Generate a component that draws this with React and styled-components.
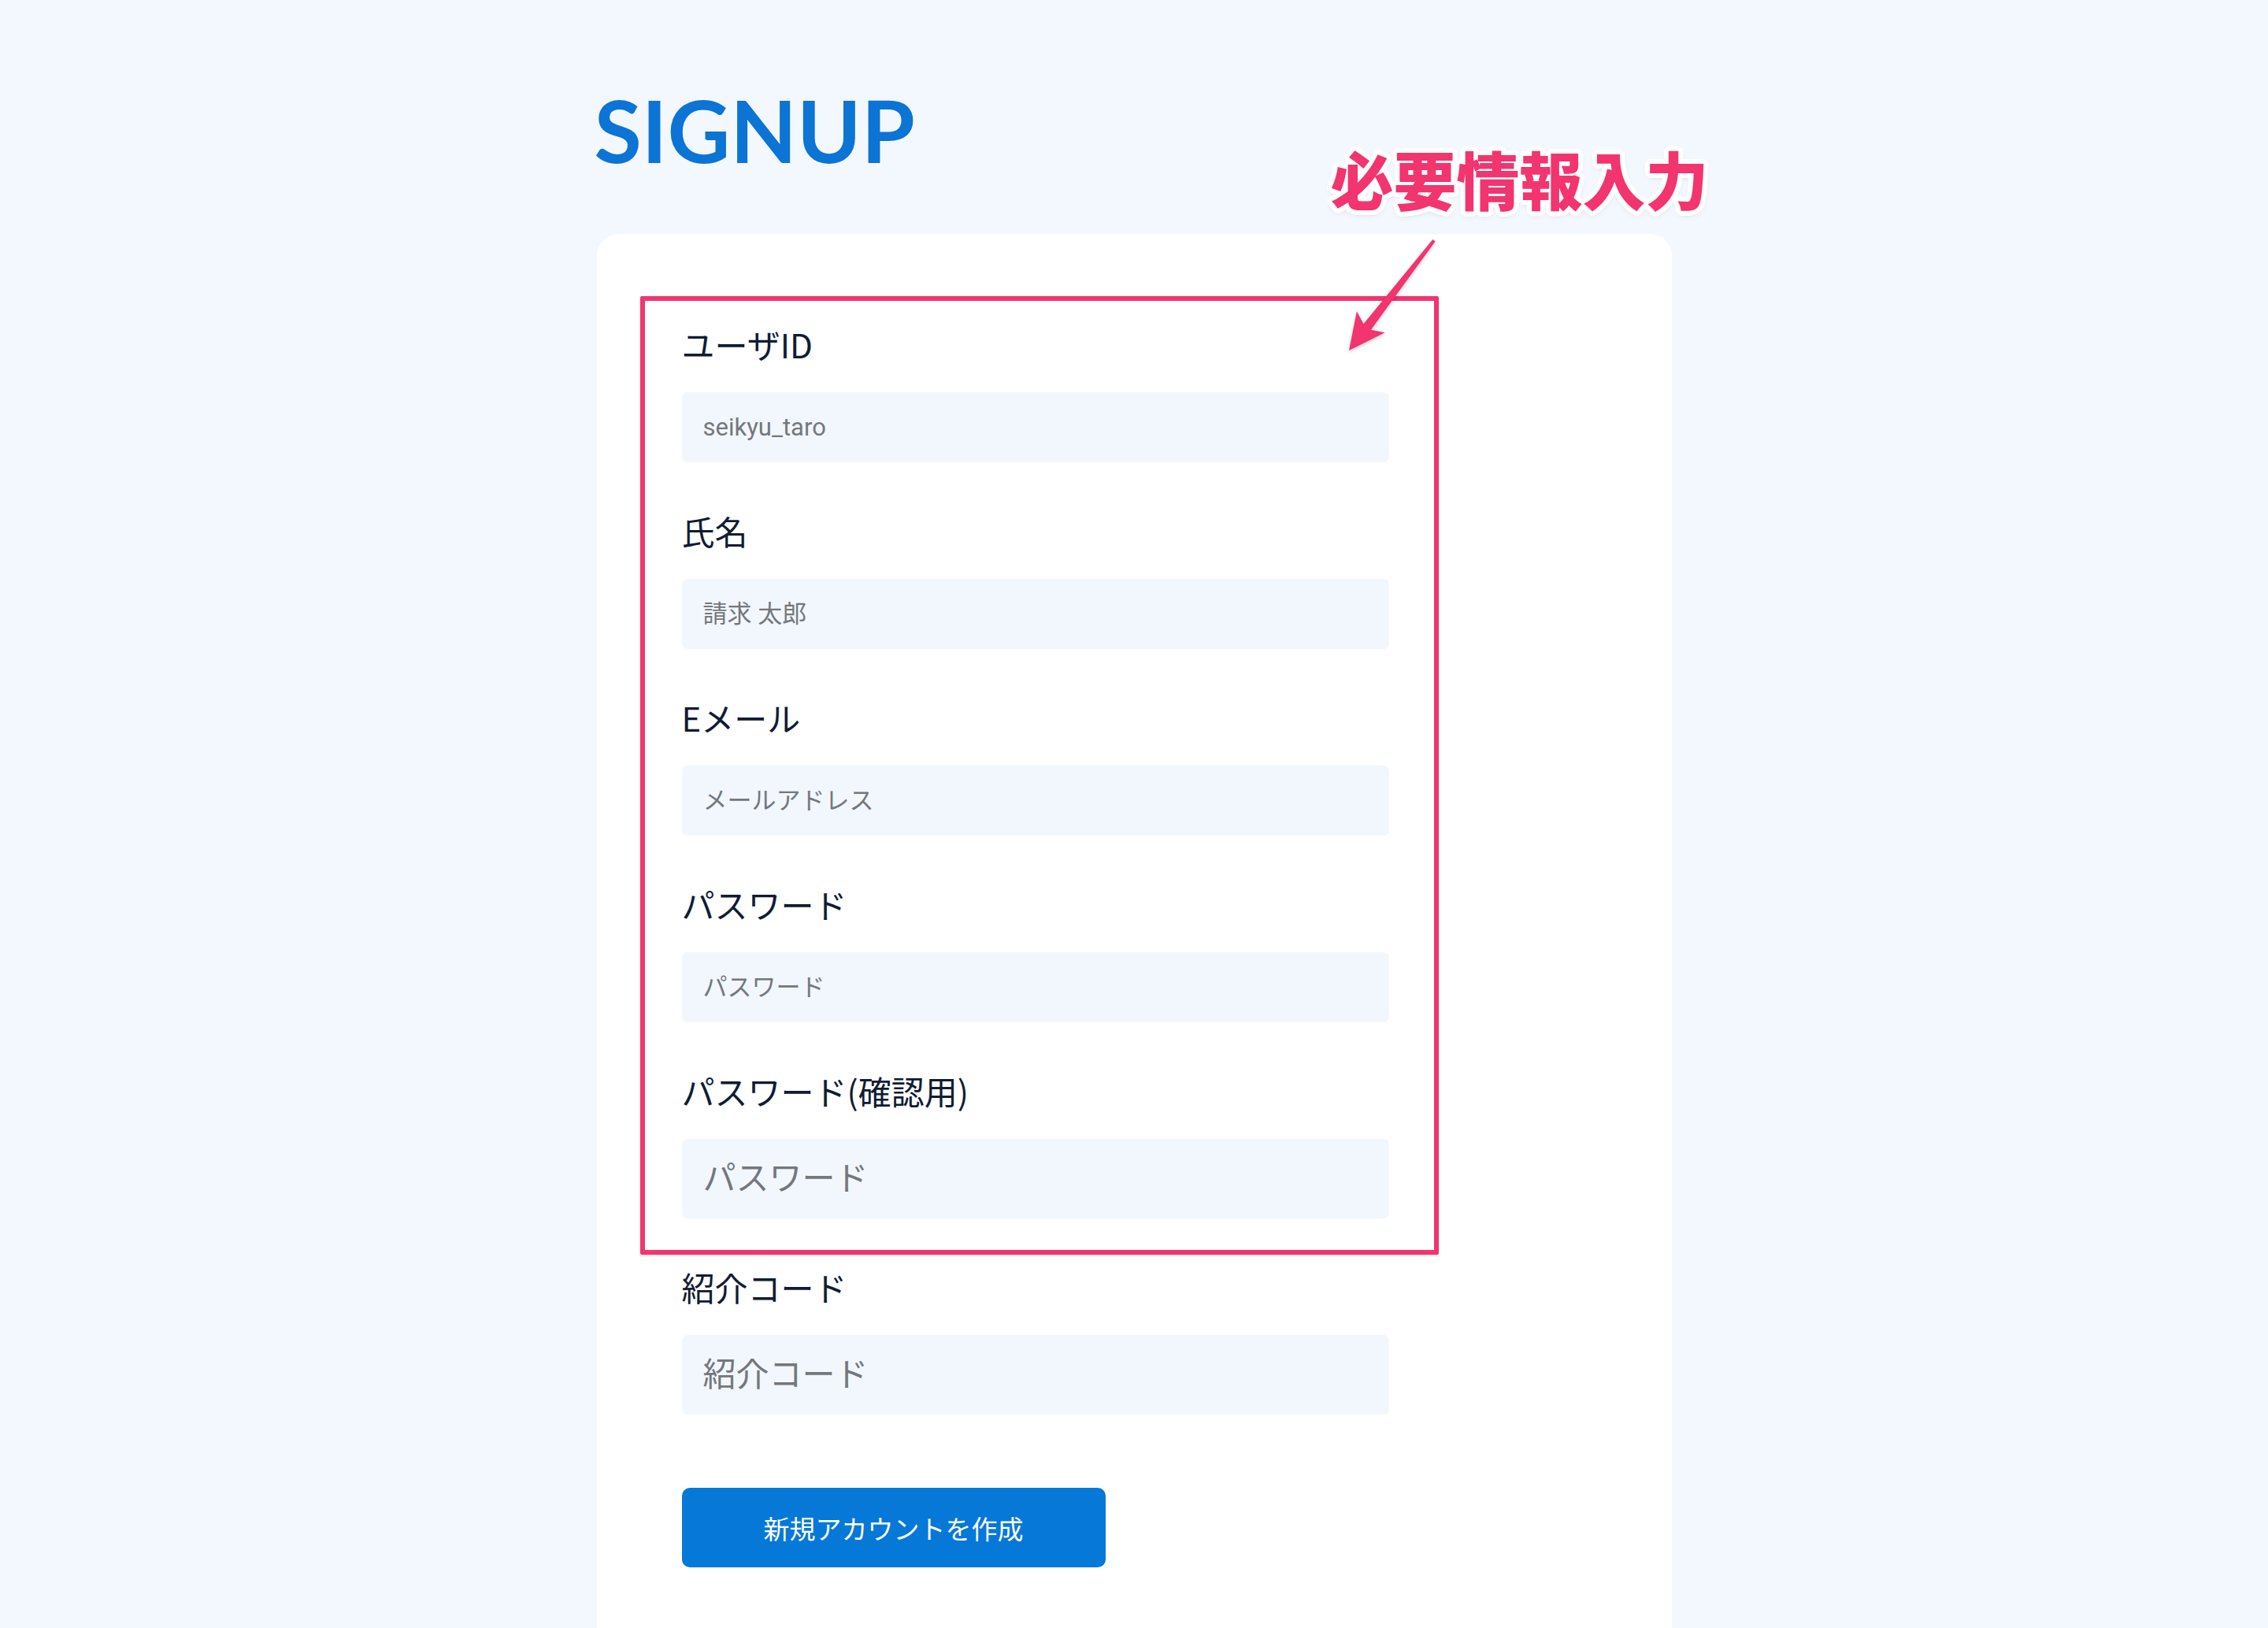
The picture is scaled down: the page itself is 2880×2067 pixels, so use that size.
import React from 'react'
import styled, { createGlobalStyle } from 'styled-components'

const outline = (r, color) => {
  const list = []
  for (let i = 0; i < 24; i++) {
    const a = (i / 24) * Math.PI * 2
    list.push(`${(Math.cos(a) * r).toFixed(2)}px ${(Math.sin(a) * r).toFixed(2)}px 0 ${color}`)
  }
  return list.join(',')
}

const GlobalStyle = createGlobalStyle`
body{
margin:0;
background-color:#f3f8fe;
font-family:"Noto Sans CJK JP", sans-serif;
overflow:hidden;
}
`

const Page = styled.div`
position:relative;
width:1365px;
margin:0 auto;
padding-top:109px;
`
const Title = styled.h1`
margin:0 0 77px -3px;
font-family:Lato, "Liberation Sans", sans-serif;
font-weight:700;
font-size:110px;
line-height:111px;
letter-spacing:0;
color:#0b74d5;
`
const Card = styled.div`
position:relative;
background-color:#ffffff;
border-radius:28px 28px 0 0;
padding:110px 108px 140px 108px;
`
const Form = styled.form`
display:flex;
flex-direction:column;
width:898px;
`
const Field = styled.div`
display:flex;
flex-direction:column;
margin-bottom:57px;
`
const Label = styled.label`
font-family:"Noto Sans CJK JP", sans-serif;
font-size:42px;
line-height:60px;
color:#0f1c33;
margin-bottom:31px;
`
const Input = styled.input`
box-sizing:border-box;
width:100%;
height:${({ large }) => large ? "101px" : "89px"};
border:none;
border-radius:7px;
background-color:#f2f7fd;
padding:0 27px;
font-family:Roboto, "Noto Sans CJK JP", sans-serif;
font-size:${({ large }) => large ? "42px" : "31px"};
color:#333;
outline:none;
&::placeholder{
color:#74777c;
}
`
const Button = styled.button`
margin-top:36px;
width:538px;
height:101px;
border:none;
border-radius:10px;
background-color:#0678d8;
color:#ffffff;
font-family:"Noto Sans CJK JP", sans-serif;
font-size:33px;
cursor:pointer;
`
const Highlight = styled.div`
position:absolute;
left:55px;
top:79px;
width:1014px;
height:1217px;
box-sizing:border-box;
border:6px solid #f2346f;
border-radius:2px;
box-shadow:0 1px 3px rgba(0,0,0,0.18);
pointer-events:none;
`
const Note = styled.div`
position:absolute;
left:932px;
top:185px;
font-family:"Noto Sans CJK JP", sans-serif;
font-weight:900;
font-size:80px;
line-height:80px;
color:#f2346f;
white-space:nowrap;
text-shadow:${outline(6, "#ffffff")},${outline(3, "#ffffff")},0 3px 8px rgba(60,70,90,0.35);
`
const Arrow = styled.svg`
position:absolute;
left:943px;
top:295px;
width:130px;
height:160px;
overflow:visible;
filter:drop-shadow(0 2px 2px rgba(0,0,0,0.2));
`

const fields = [
  { label: "ユーザID", placeholder: "seikyu_taro" },
  { label: "氏名", placeholder: "請求 太郎" },
  { label: "Eメール", placeholder: "メールアドレス" },
  { label: "パスワード", placeholder: "パスワード" },
  { label: "パスワード(確認用)", placeholder: "パスワード", large: true },
  { label: "紹介コード", placeholder: "紹介コード", large: true },
]

const App = () => {
  return (
    <>
      <GlobalStyle />
      <Page>
        <Title>SIGNUP</Title>
        <Card>
          <Form onSubmit={(e) => e.preventDefault()}>
            {
              fields.map((item) => (
                <Field key={item.label}>
                  <Label>{item.label}</Label>
                  <Input large={item.large} placeholder={item.placeholder} />
                </Field>
              ))
            }
            <Button type="submit">新規アカウントを作成</Button>
          </Form>
          <Highlight />
        </Card>
        <Note>必要情報入力</Note>
        <Arrow viewBox="0 0 130 160">
          <polygon
            points="12,150 21.9,100.2 30.5,116.3 118.4,9 121.6,11.4 39.9,123.7 57.7,127.3"
            fill="#f2346f"
          />
        </Arrow>
      </Page>
    </>
  )
}

export default App
